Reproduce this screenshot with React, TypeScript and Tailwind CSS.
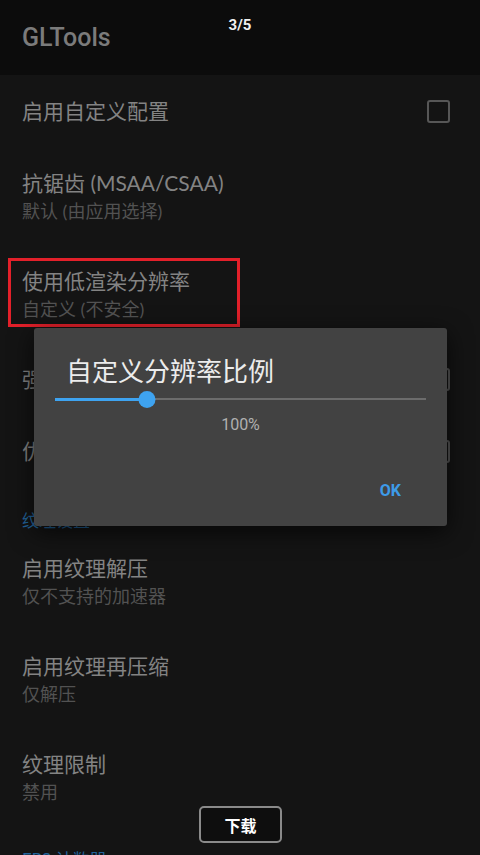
const rows = [
  { title: '启用自定义配置', check: true },
  { title: '抗锯齿 (MSAA/CSAA)', sub: '默认 (由应用选择)' },
  { title: '使用低渲染分辨率', sub: '自定义 (不安全)', marked: true },
  { title: '强制垂直同步', check: true },
  { title: '优化着色器', check: true },
];

const textureRows = [
  { title: '启用纹理解压', sub: '仅不支持的加速器' },
  { title: '启用纹理再压缩', sub: '仅解压' },
  { title: '纹理限制', sub: '禁用' },
];

const font = "font-['Lato','Noto_Sans_CJK_SC',sans-serif]";

function Row({ title, sub, check, marked }: { title: string; sub?: string; check?: boolean; marked?: boolean }) {
  return (
    <div className="relative flex items-center justify-between py-[21px] pl-[22px] pr-[30px]">
      <div className="flex flex-col">
        <span className="text-[21px] leading-[30px] text-[#838383]">{title}</span>
        {sub && <span className="text-[18px] leading-[26px] text-[#525252]">{sub}</span>}
      </div>
      {check && <div className="h-[23px] w-[23px] rounded-[3px] border-2 border-[#575757]" />}
      {marked && (
        <div className="absolute left-[8px] top-[13px] h-[69px] w-[232px] border-[3px] border-[#e3202a]" />
      )}
    </div>
  );
}

function Section({ label }: { label: string }) {
  return (
    <div className="pl-[22px] pt-[23px] text-[17px] leading-[22px] text-[#22639a]">{label}</div>
  );
}

export default function App() {
  return (
    <div className={`relative h-[855px] w-[480px] overflow-hidden bg-[#141414] ${font}`}>
      <div className="flex h-[75px] items-center bg-[#0c0c0c] pl-[22px]">
        <span className="font-['Roboto',sans-serif] text-[25px] font-medium text-[#7b7b7b]">GLTools</span>
      </div>
      <div className="absolute left-0 right-0 top-[14px] text-center font-['Roboto',sans-serif] text-[15px] font-bold text-[#f0f0f0]">
        3/5
      </div>

      {rows.map((r) => (
        <Row key={r.title} {...r} />
      ))}
      <Section label="纹理设置" />
      {textureRows.map((r) => (
        <Row key={r.title} {...r} />
      ))}
      <Section label="FPS 计数器" />

      {/* dialog */}
      <div className="absolute left-[34px] top-[328px] flex h-[198px] w-[413px] flex-col rounded-[3px] bg-[#424242] shadow-[0_6px_24px_rgba(0,0,0,0.7)]">
        <div className="pl-[32px] pt-[26px] font-['Noto_Sans_CJK_SC',sans-serif] text-[26px] leading-[32px] text-[#ececec]">
          自定义分辨率比例
        </div>
        <div className="relative mx-[21px] mt-[3px] flex h-[20px] items-center">
          <div className="h-[2px] w-full bg-[#6c6c6c]" />
          <div className="absolute left-0 h-[3px] w-[24.8%] bg-[#3ea3f0]" />
          <div className="absolute left-[24.8%] h-[17px] w-[17px] -translate-x-1/2 rounded-full bg-[#3ea3f0]" />
        </div>
        <div className="mt-[6px] text-center font-['Roboto',sans-serif] text-[16px] leading-[20px] text-[#b0b0b0]">100%</div>
        <div className="mt-[46px] flex justify-end pr-[46px]">
          <span className="font-['Roboto',sans-serif] text-[16px] font-bold leading-[20px] text-[#3d9be9]">OK</span>
        </div>
      </div>

      {/* download button */}
      <div className="absolute left-[199px] top-[806px] flex h-[37px] w-[83px] items-center justify-center rounded-[5px] border-2 border-[#8a8a8a] bg-[#0e0e0e]">
        <span className="font-['Noto_Sans_CJK_SC',sans-serif] text-[16px] font-bold text-white">下载</span>
      </div>
    </div>
  );
}
